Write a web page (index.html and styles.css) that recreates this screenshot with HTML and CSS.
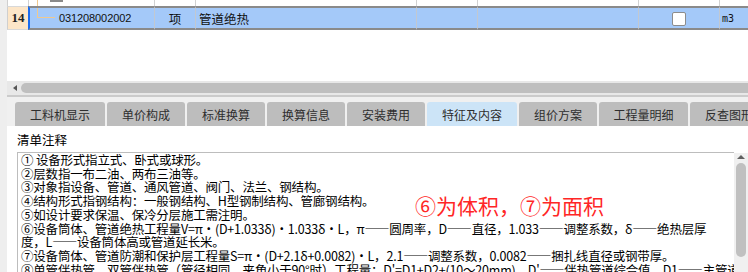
FILE: index.html
```html
<!DOCTYPE html>
<html lang="zh-CN">
<head>
<meta charset="utf-8">
<title>清单注释</title>
<link rel="stylesheet" href="styles.css">
</head>
<body>
<div class="app">
  <div class="gutter"></div>
  <div class="main">
    <div class="grid">
      <div class="pc pc-h"></div>
      <div class="pc pc-code"></div>
      <div class="pc"></div>
      <div class="pc"></div>
      <div class="pc"></div>
      <div class="pc"></div>
      <div class="pc"></div>
      <div class="pc"></div>

      <div class="hdr">14</div>
      <div class="c code">031208002002</div>
      <div class="c unit">项</div>
      <div class="c name">管道绝热</div>
      <div class="c"></div>
      <div class="c"></div>
      <div class="c chk"><span class="box"></span></div>
      <div class="c m3">m3</div>
    </div>
    <div class="hscroll">
      <span class="arrow-left"></span>
      <span class="hthumb"></span>
    </div>
    <div class="sep"></div>
    <div class="panel">
      <div class="tabs">
        <div class="tab w90">工料机显示</div>
        <div class="tab">单价构成</div>
        <div class="tab">标准换算</div>
        <div class="tab">换算信息</div>
        <div class="tab">安装费用</div>
        <div class="tab w90 active">特征及内容</div>
        <div class="tab">组价方案</div>
        <div class="tab w89">工程量明细</div>
        <div class="tab">反查图形</div>
      </div>
      <div class="content">
        <div class="label">清单注释</div>
        <div class="memo">
          <div class="memo-text">
            <div class="ln">① 设备形式指立式、卧式或球形。</div>
            <div class="ln">②层数指一布二油、两布三油等。</div>
            <div class="ln">③对象指设备、管道、通风管道、阀门、法兰、钢结构。</div>
            <div class="ln">④结构形式指钢结构：一般钢结构、H型钢制结构、管廊钢结构。</div>
            <div class="ln">⑤如设计要求保温、保冷分层施工需注明。</div>
            <div class="ln">⑥设备筒体、管道绝热工程量V=π·(D+1.033δ)·1.033δ·L，π——圆周率，D——直径，1.033——调整系数，δ——绝热层厚</div>
            <div class="ln">度，L——设备筒体高或管道延长米。</div>
            <div class="ln">⑦设备筒体、管道防潮和保护层工程量S=π·(D+2.1δ+0.0082)·L，2.1——调整系数，0.0082——捆扎线直径或钢带厚。</div>
            <div class="ln">⑧单管伴热管、双管伴热管（管径相同，夹角小于90°时）工程量：D'=D1+D2+(10～20mm)，D'——伴热管道综合值，D1——主管道</div>
          </div>
          <div class="vscroll">
            <span class="arrow-up"></span>
            <span class="vthumb"></span>
          </div>
        </div>
        <div class="note">⑥为体积，⑦为面积</div>
      </div>
    </div>
  </div>
</div>
</body>
</html>
```

FILE: styles.css
```css
* { box-sizing: border-box; }
html, body { margin: 0; padding: 0; }
body {
  width: 748px;
  height: 272px;
  overflow: hidden;
  background: #f0f0f0;
  font-family: "Noto Sans CJK SC", sans-serif;
  font-size: 12px;
  color: #000;
}
.app { display: flex; height: 272px; }
.gutter { width: 7px; flex: none; background: #eeeeee; }
.main { flex: 1; min-width: 0; display: flex; flex-direction: column; }

/* grid */
.grid {
  height: 81px;
  flex: none;
  background: #fff;
  display: grid;
  grid-template-columns: 21px 126px 41px 221px 61px 161px 81px 1fr;
  grid-template-rows: 6px 24px;
  align-content: start;
}
.pc { border-left: 1px solid #d2d2d2; }
.pc-h { border-left-color: #cfcfcf; }
.pc-code { position: relative; }
.pc-code::before {
  content: "";
  position: absolute;
  left: 8px; top: 0;
  width: 1px; height: 6px;
  background: #f0c98f;
}
.pc-code::after {
  content: "";
  position: absolute;
  left: 21px; top: 0;
  width: 13px; height: 2px;
  background: #8a8a8a;
}
.hdr {
  background: #fde6c8;
  border-left: 1px solid #cfcfcf;
  border-top: 1px solid #d8d8d8;
  border-bottom: 1px solid #d8d8d8;
  display: flex;
  align-items: center;
  justify-content: center;
  font-family: "Liberation Serif", serif;
  font-weight: bold;
  font-size: 13px;
  color: #222;
}
.c {
  background: #a4c9f9;
  border-top: 2px solid #8a8a8a;
  border-bottom: 2px solid #8a8a8a;
  border-left: 1px solid #c2c8d0;
  display: flex;
  align-items: center;
  white-space: nowrap;
  overflow: hidden;
  color: #111;
}
.code {
  position: relative;
  border-left: 2px solid #1a6cf0;
  padding-left: 29px;
  font-family: "Liberation Sans", sans-serif;
  font-size: 11px;
  letter-spacing: -0.1px;
  overflow: visible;
}
.code::before {
  content: "";
  position: absolute;
  left: 7px; top: 0;
  width: 17px; height: 9px;
  border-left: 1px solid #f0c98f;
  border-bottom: 1px solid #f0c98f;
}
.unit { justify-content: center; font-size: 12.5px; }
.name { padding-left: 3px; font-size: 12.5px; }
.chk { padding-left: 33px; }
.box {
  width: 14px; height: 14px;
  background: #fff;
  border: 1px solid #8c8c8c;
  border-radius: 2px;
  margin-top: 1px;
}
.m3 {
  padding-left: 2px;
  font-family: "DejaVu Sans Mono", monospace;
  font-size: 10px;
}

/* horizontal scrollbar */
.hscroll {
  height: 14px;
  flex: none;
  background: #e8e8e8;
  display: flex;
  align-items: center;
}
.arrow-left {
  width: 0; height: 0;
  margin-left: 6px;
  border-right: 4px solid #555;
  border-top: 3.5px solid transparent;
  border-bottom: 3.5px solid transparent;
}
.hthumb {
  flex: 1;
  height: 10px;
  margin-left: 4px;
  background: #bfbfbf;
  border-radius: 5px 0 0 5px;
}
.sep { height: 2px; flex: none; background: #cbcbcb; }

/* bottom panel */
.panel { flex: 1; display: flex; flex-direction: column; min-height: 0; }
.tabs {
  height: 29px;
  flex: none;
  display: flex;
  gap: 2px;
  padding: 5px 0 0 8px;
  overflow: hidden;
  background: #f0f0f0;
}
.tab {
  flex: none;
  width: 78px;
  height: 24px;
  background: #bdbdbd;
  border-radius: 3px 3px 0 0;
  display: flex;
  align-items: center;
  justify-content: center;
  color: #2e2e2e;
  font-size: 12px;
  white-space: nowrap;
}
.tab.w90 { width: 90px; }
.tab.w89 { width: 89px; }
.tab.active { background: #cce4f7; }

.content {
  flex: 1;
  min-height: 0;
  background: #fff;
  position: relative;
  padding: 4px 0 0 10px;
  display: flex;
  flex-direction: column;
}
.label { height: 20px; line-height: 20px; font-size: 12.5px; flex: none; }
.memo {
  margin-top: 2px;
  flex: 1;
  min-height: 0;
  display: flex;
}
.memo-text {
  flex: 1;
  min-width: 0;
  border-top: 1px solid #bdbdbd;
  border-left: 1px solid #bdbdbd;
  padding-left: 3px;
  overflow-x: clip;
  overflow-y: visible;
  font-size: 12.5px;
  letter-spacing: -0.2px;
  line-height: 13.7px;
  white-space: nowrap;
}
.vscroll {
  width: 14px;
  flex: none;
  margin-top: 1px;
  background: #f0f0f0;
  display: flex;
  flex-direction: column;
  align-items: center;
}
.arrow-up {
  width: 0; height: 0;
  margin-top: 2px;
  border-bottom: 4px solid #606060;
  border-left: 4px solid transparent;
  border-right: 4px solid transparent;
}
.vthumb {
  width: 10px;
  height: 94px;
  margin-top: 4px;
  background: #c0c0c0;
  border-radius: 5px;
}
.note {
  position: absolute;
  left: 408px;
  top: 66px;
  font-size: 21px;
  line-height: 26px;
  color: #ff2626;
  white-space: nowrap;
}
```
